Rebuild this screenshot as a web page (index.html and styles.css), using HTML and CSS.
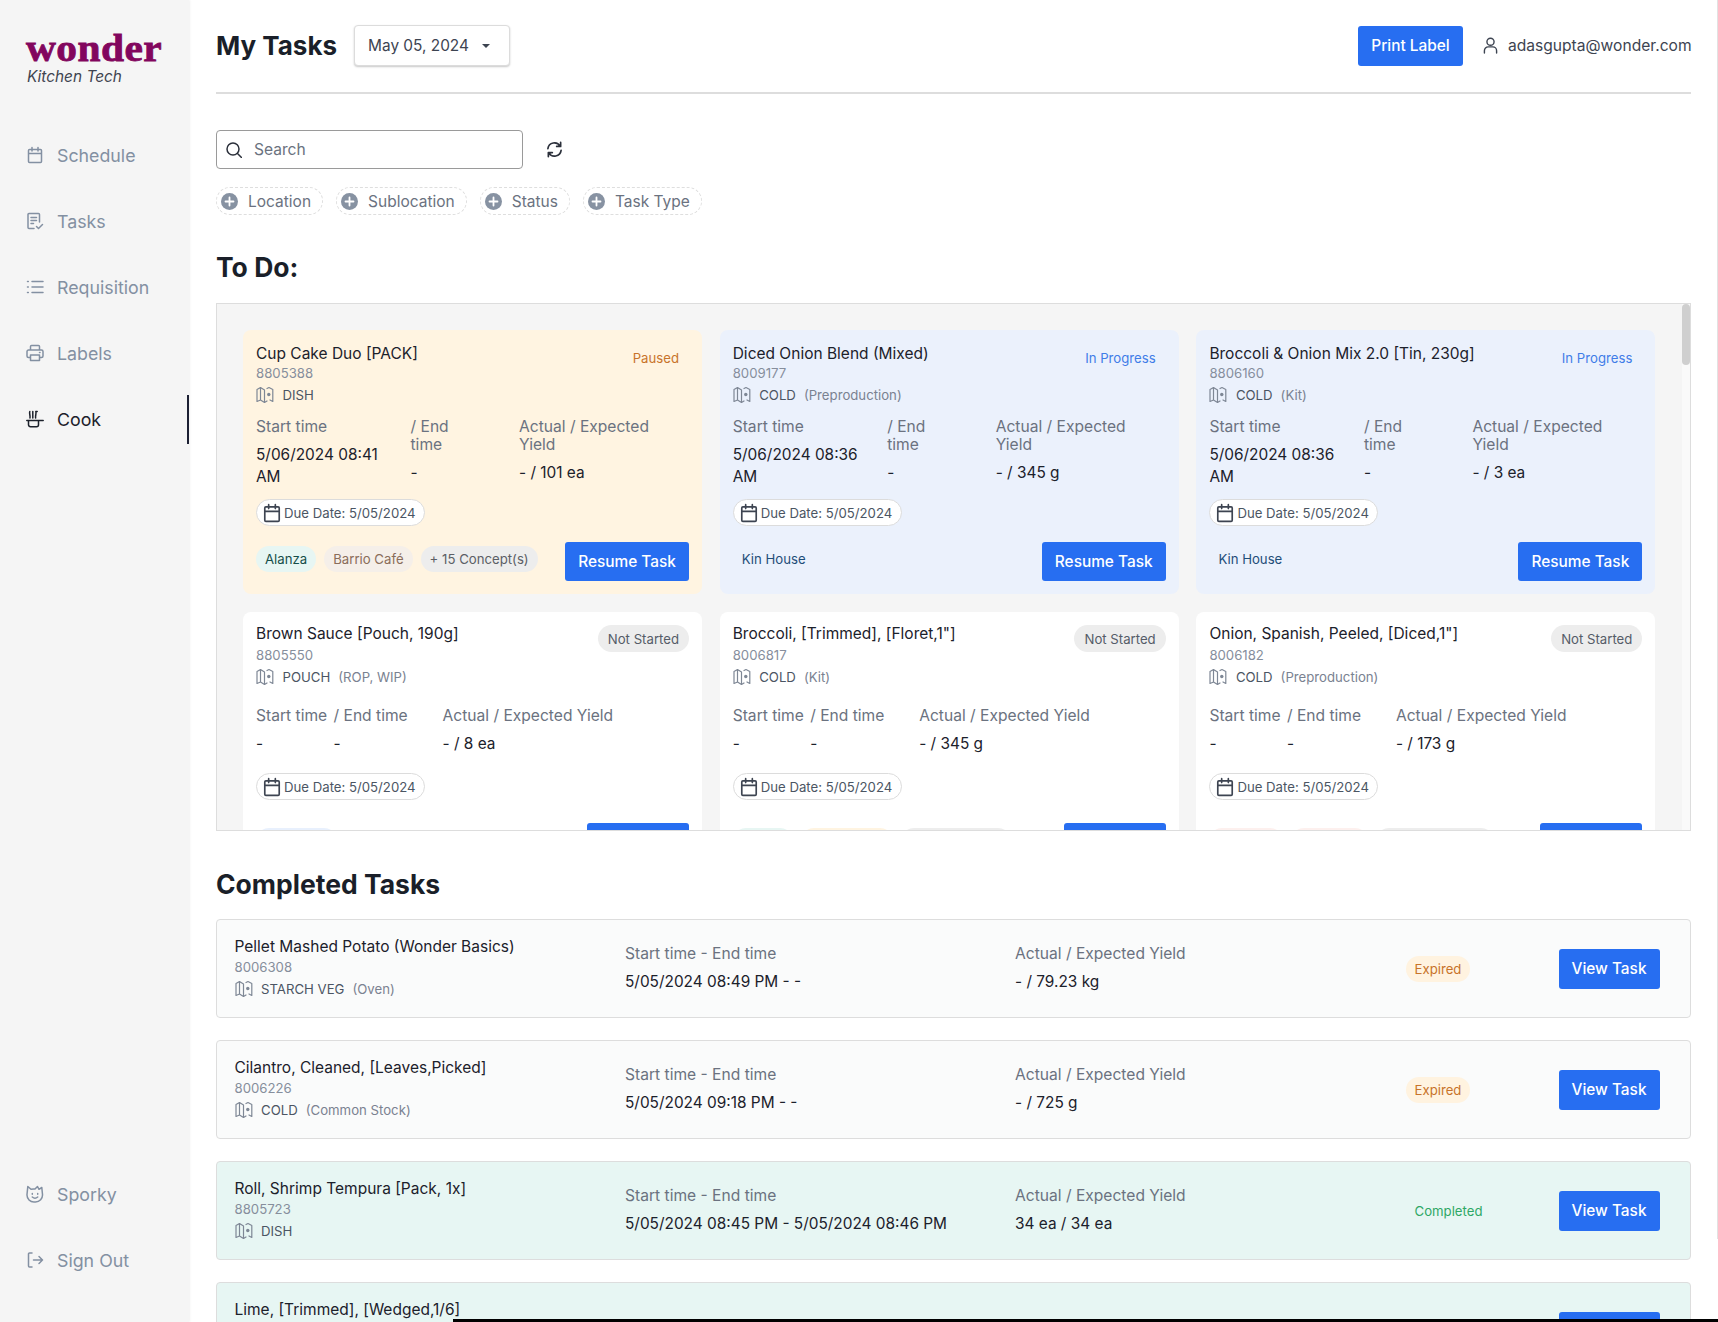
FILE: index.html
```html
<!DOCTYPE html>
<html lang="en">
<head>
<meta charset="utf-8">
<title>My Tasks</title>
<link rel="stylesheet" href="styles.css">
</head>
<body>
<svg class="sprite" aria-hidden="true">
  <symbol id="i-cal" viewBox="0 0 18 18"><path d="M2.500 4.500a1 1 0 0 1 1-1h11a1 1 0 0 1 1 1v11a1 1 0 0 1-1 1h-11a1 1 0 0 1-1-1zM2.500 7.500h13M6 1.500v3.500M12 1.500v3.500"/></symbol>
  <symbol id="i-tasks" viewBox="0 0 18 18"><path d="M8 16.500H3a1 1 0 0 1-1-1v-13a1 1 0 0 1 1-1h9.500a1 1 0 0 1 1 1V10M5 5.500h5.500M5 8.500h5.500M5 11.500h2.500M10.500 14.500l2 2 4-4"/></symbol>
  <symbol id="i-list" viewBox="0 0 18 18"><path d="M6 3.500h11M6 9h11M6 14.500h11M1.500 3.500h.8M1.500 9h.8M1.500 14.500h.8"/></symbol>
  <symbol id="i-print" viewBox="0 0 18 18"><path d="M4.500 6V2.500a1 1 0 0 1 1-1h7a1 1 0 0 1 1 1V6M4.500 13.500h-2a1.500 1.500 0 0 1-1.500-1.500V7.500A1.500 1.500 0 0 1 2.500 6h13A1.500 1.500 0 0 1 17 7.500V12a1.500 1.500 0 0 1-1.500 1.500h-2M4.500 11h9v5.500h-9zM13.500 8.500h.5"/></symbol>
  <symbol id="i-cook" viewBox="0 0 18 18"><path d="M.8 10.500h16.400M2.500 10.500v4.200a2 2 0 0 0 2 2h6a2 2 0 0 0 2-2v-4.200M3.800 1.500c-.8 2 .6 3.500.2 6.500M6.800 1.500V8M9.800 1.500c.8 2-.6 3.500-.2 6.500M9.800 1.500h1.400"/></symbol>
  <symbol id="i-sporky" viewBox="0 0 18 18"><path d="M1.800 1.500l3.200 2.800a8.500 8.500 0 0 1 4-.3l2.500-2.500 1.500 2.800 2.800-1.800.7 7a7 7 0 0 1-7 7.500h-1A7 7 0 0 1 1 9.500zM6.300 8.500v.8M11.700 8.500v.8M6.300 12c1.500 1.300 3.900 1.300 5.400 0"/></symbol>
  <symbol id="i-out" viewBox="0 0 18 18"><path d="M6 2H3.500a1 1 0 0 0-1 1v12a1 1 0 0 0 1 1H6M7.500 9h9M13 5.500L16.500 9 13 12.500"/></symbol>
  <symbol id="i-map" viewBox="0 0 18 18"><path d="M8.500 4L4.500 1.500 1 3.500v12l3.500-1.500 4 2.500 2.500-1.500M4.500 1.500V14M8.500 4v12.500M11 2.500l2-1 3.800 2v12l-2.800-1.500"/><circle class="fill" cx="12.800" cy="8.500" r="1.700"/></symbol>
  <symbol id="i-plus" viewBox="0 0 17 17"><circle class="solid" cx="8.500" cy="8.500" r="8.500"/><path class="white" d="M8.500 4.500v8M4.500 8.500h8"/></symbol>
  <symbol id="i-search" viewBox="0 0 16 16"><circle cx="7" cy="7" r="6"/><path d="M11.500 11.500L15.500 15.500"/></symbol>
  <symbol id="i-refresh" viewBox="0 0 18 18"><path d="M2 8a7 7 0 0 1 13-2.500M16 10a7 7 0 0 1-13 2.500M15.500 1.500v4.200h-4.200M2.500 16.500v-4.200h4.200"/></symbol>
  <symbol id="i-user" viewBox="0 0 16 18"><circle cx="8" cy="5" r="3.800"/><path d="M1.500 17v-2.500a4 4 0 0 1 4-4h5a4 4 0 0 1 4 4V17"/></symbol>
</svg>

<div class="app">
  <aside class="sidebar">
    <div class="brand">
      <div class="logo">wonder</div>
      <div class="brand-sub">Kitchen Tech</div>
    </div>
    <nav class="nav">
      <a class="nav-item"><svg class="nav-icon"><use href="#i-cal"/></svg><span>Schedule</span></a>
      <a class="nav-item"><svg class="nav-icon"><use href="#i-tasks"/></svg><span>Tasks</span></a>
      <a class="nav-item"><svg class="nav-icon"><use href="#i-list"/></svg><span>Requisition</span></a>
      <a class="nav-item"><svg class="nav-icon"><use href="#i-print"/></svg><span>Labels</span></a>
      <a class="nav-item active"><svg class="nav-icon"><use href="#i-cook"/></svg><span>Cook</span></a>
    </nav>
    <nav class="nav nav-bottom">
      <a class="nav-item"><svg class="nav-icon"><use href="#i-sporky"/></svg><span>Sporky</span></a>
      <a class="nav-item"><svg class="nav-icon"><use href="#i-out"/></svg><span>Sign Out</span></a>
    </nav>
  </aside>

  <main class="main">
    <header class="topbar">
      <h1 class="page-title">My Tasks</h1>
      <button class="date-btn">May 05, 2024<i class="caret"></i></button>
      <div class="topbar-right">
        <button class="btn btn-print">Print Label</button>
        <svg class="user-icon"><use href="#i-user"/></svg>
        <span class="email">adasgupta@wonder.com</span>
      </div>
    </header>

    <div class="search-row">
      <div class="search"><svg class="search-icon"><use href="#i-search"/></svg><span>Search</span></div>
      <svg class="refresh"><use href="#i-refresh"/></svg>
    </div>

    <div class="chips">
      <span class="chip"><svg class="plus"><use href="#i-plus"/></svg>Location</span>
      <span class="chip"><svg class="plus"><use href="#i-plus"/></svg>Sublocation</span>
      <span class="chip"><svg class="plus"><use href="#i-plus"/></svg>Status</span>
      <span class="chip"><svg class="plus"><use href="#i-plus"/></svg>Task Type</span>
    </div>

    <h2 class="section-title todo-title">To Do:</h2>
    <section class="board">
      <div class="board-grid">

        <article class="card paused">
          <div class="card-head">
            <div class="card-info">
              <div class="title">Cup Cake Duo [PACK]</div>
              <div class="sku">8805388</div>
              <div class="loc"><svg class="map"><use href="#i-map"/></svg><span>DISH</span></div>
            </div>
            <span class="status st-paused">Paused</span>
          </div>
          <div class="times times-narrow">
            <div class="tcol"><div class="thead">Start time</div><div class="tval">5/06/2024 08:41 AM</div></div>
            <div class="tcol"><div class="thead">/ End time</div><div class="tval">-</div></div>
            <div class="tcol"><div class="thead">Actual / Expected Yield</div><div class="tval">- / 101 ea</div></div>
          </div>
          <div class="due"><svg class="due-icon"><use href="#i-cal"/></svg>Due Date: 5/05/2024</div>
          <div class="card-foot">
            <div class="tags"><span class="tag t-mint">Alanza</span><span class="tag t-sand">Barrio Café</span><span class="tag t-gray">+ 15 Concept(s)</span></div>
            <button class="btn">Resume Task</button>
          </div>
        </article>

        <article class="card progress">
          <div class="card-head">
            <div class="card-info">
              <div class="title">Diced Onion Blend (Mixed)</div>
              <div class="sku">8009177</div>
              <div class="loc"><svg class="map"><use href="#i-map"/></svg><span>COLD</span><span class="loc-sub">(Preproduction)</span></div>
            </div>
            <span class="status st-progress">In Progress</span>
          </div>
          <div class="times times-narrow">
            <div class="tcol"><div class="thead">Start time</div><div class="tval">5/06/2024 08:36 AM</div></div>
            <div class="tcol"><div class="thead">/ End time</div><div class="tval">-</div></div>
            <div class="tcol"><div class="thead">Actual / Expected Yield</div><div class="tval">- / 345 g</div></div>
          </div>
          <div class="due"><svg class="due-icon"><use href="#i-cal"/></svg>Due Date: 5/05/2024</div>
          <div class="card-foot">
            <div class="tags"><span class="tag t-plain">Kin House</span></div>
            <button class="btn">Resume Task</button>
          </div>
        </article>

        <article class="card progress">
          <div class="card-head">
            <div class="card-info">
              <div class="title">Broccoli &amp; Onion Mix 2.0 [Tin, 230g]</div>
              <div class="sku">8806160</div>
              <div class="loc"><svg class="map"><use href="#i-map"/></svg><span>COLD</span><span class="loc-sub">(Kit)</span></div>
            </div>
            <span class="status st-progress">In Progress</span>
          </div>
          <div class="times times-narrow">
            <div class="tcol"><div class="thead">Start time</div><div class="tval">5/06/2024 08:36 AM</div></div>
            <div class="tcol"><div class="thead">/ End time</div><div class="tval">-</div></div>
            <div class="tcol"><div class="thead">Actual / Expected Yield</div><div class="tval">- / 3 ea</div></div>
          </div>
          <div class="due"><svg class="due-icon"><use href="#i-cal"/></svg>Due Date: 5/05/2024</div>
          <div class="card-foot">
            <div class="tags"><span class="tag t-plain">Kin House</span></div>
            <button class="btn">Resume Task</button>
          </div>
        </article>

        <article class="card card-open">
          <div class="card-head">
            <div class="card-info">
              <div class="title">Brown Sauce [Pouch, 190g]</div>
              <div class="sku">8805550</div>
              <div class="loc"><svg class="map"><use href="#i-map"/></svg><span>POUCH</span><span class="loc-sub">(ROP, WIP)</span></div>
            </div>
            <span class="status st-idle">Not Started</span>
          </div>
          <div class="times times-wide">
            <div class="tcol"><div class="thead">Start time</div><div class="tval">-</div></div>
            <div class="tcol"><div class="thead">/ End time</div><div class="tval">-</div></div>
            <div class="tcol"><div class="thead">Actual / Expected Yield</div><div class="tval">- / 8 ea</div></div>
          </div>
          <div class="due"><svg class="due-icon"><use href="#i-cal"/></svg>Due Date: 5/05/2024</div>
          <div class="card-foot">
            <div class="tags"><span class="tag t-blue w-81"></span></div>
            <button class="btn btn-start"></button>
          </div>
        </article>

        <article class="card card-open">
          <div class="card-head">
            <div class="card-info">
              <div class="title">Broccoli, [Trimmed], [Floret,1"]</div>
              <div class="sku">8006817</div>
              <div class="loc"><svg class="map"><use href="#i-map"/></svg><span>COLD</span><span class="loc-sub">(Kit)</span></div>
            </div>
            <span class="status st-idle">Not Started</span>
          </div>
          <div class="times times-wide">
            <div class="tcol"><div class="thead">Start time</div><div class="tval">-</div></div>
            <div class="tcol"><div class="thead">/ End time</div><div class="tval">-</div></div>
            <div class="tcol"><div class="thead">Actual / Expected Yield</div><div class="tval">- / 345 g</div></div>
          </div>
          <div class="due"><svg class="due-icon"><use href="#i-cal"/></svg>Due Date: 5/05/2024</div>
          <div class="card-foot">
            <div class="tags"><span class="tag t-mint w-60"></span><span class="tag t-cream w-92"></span><span class="tag t-gray w-110"></span></div>
            <button class="btn btn-start"></button>
          </div>
        </article>

        <article class="card card-open">
          <div class="card-head">
            <div class="card-info">
              <div class="title">Onion, Spanish, Peeled, [Diced,1"]</div>
              <div class="sku">8006182</div>
              <div class="loc"><svg class="map"><use href="#i-map"/></svg><span>COLD</span><span class="loc-sub">(Preproduction)</span></div>
            </div>
            <span class="status st-idle">Not Started</span>
          </div>
          <div class="times times-wide">
            <div class="tcol"><div class="thead">Start time</div><div class="tval">-</div></div>
            <div class="tcol"><div class="thead">/ End time</div><div class="tval">-</div></div>
            <div class="tcol"><div class="thead">Actual / Expected Yield</div><div class="tval">- / 173 g</div></div>
          </div>
          <div class="due"><svg class="due-icon"><use href="#i-cal"/></svg>Due Date: 5/05/2024</div>
          <div class="card-foot">
            <div class="tags"><span class="tag t-rose w-74"></span><span class="tag t-rose w-77"></span><span class="tag t-gray w-118"></span></div>
            <button class="btn btn-start"></button>
          </div>
        </article>

      </div>
      <div class="track"><div class="thumb"></div></div>
    </section>

    <h2 class="section-title done-title">Completed Tasks</h2>
    <section class="done-list">
      <article class="row">
        <div class="row-info">
          <div class="title">Pellet Mashed Potato (Wonder Basics)</div>
          <div class="sku">8006308</div>
          <div class="loc"><svg class="map"><use href="#i-map"/></svg><span>STARCH VEG</span><span class="loc-sub">(Oven)</span></div>
        </div>
        <div class="rcol"><div class="thead">Start time - End time</div><div class="tval">5/05/2024 08:49 PM - -</div></div>
        <div class="rcol"><div class="thead">Actual / Expected Yield</div><div class="tval">- / 79.23 kg</div></div>
        <div><span class="status st-expired">Expired</span></div>
        <button class="btn btn-view">View Task</button>
      </article>
      <article class="row">
        <div class="row-info">
          <div class="title">Cilantro, Cleaned, [Leaves,Picked]</div>
          <div class="sku">8006226</div>
          <div class="loc"><svg class="map"><use href="#i-map"/></svg><span>COLD</span><span class="loc-sub">(Common Stock)</span></div>
        </div>
        <div class="rcol"><div class="thead">Start time - End time</div><div class="tval">5/05/2024 09:18 PM - -</div></div>
        <div class="rcol"><div class="thead">Actual / Expected Yield</div><div class="tval">- / 725 g</div></div>
        <div><span class="status st-expired">Expired</span></div>
        <button class="btn btn-view">View Task</button>
      </article>
      <article class="row row-done">
        <div class="row-info">
          <div class="title">Roll, Shrimp Tempura [Pack, 1x]</div>
          <div class="sku">8805723</div>
          <div class="loc"><svg class="map"><use href="#i-map"/></svg><span>DISH</span></div>
        </div>
        <div class="rcol"><div class="thead">Start time - End time</div><div class="tval">5/05/2024 08:45 PM - 5/05/2024 08:46 PM</div></div>
        <div class="rcol"><div class="thead">Actual / Expected Yield</div><div class="tval">34 ea / 34 ea</div></div>
        <div><span class="status st-done">Completed</span></div>
        <button class="btn btn-view">View Task</button>
      </article>
      <article class="row row-done">
        <div class="row-info">
          <div class="title">Lime, [Trimmed], [Wedged,1/6]</div>
        </div>
        <div class="rcol"><div class="thead">Start time - End time</div></div>
        <div class="rcol"><div class="thead">Actual / Expected Yield</div></div>
        <div></div>
        <button class="btn btn-view"></button>
      </article>
    </section>
  </main>
</div>
<div class="edge-line"></div>
<div class="black-bar"></div>
</body>
</html>
```

FILE: styles.css
```css
* { box-sizing: border-box; }
html, body { margin: 0; height: 1322px; overflow: hidden; }
body {
  font-family: Inter, "Liberation Sans", sans-serif;
  font-size: 15.6px;
  color: #1c212b;
  background: #fff;
  position: relative;
}
.sprite { display: none; }
svg { fill: none; stroke: currentColor; stroke-width: 1.5; stroke-linecap: round; stroke-linejoin: round; flex: none; }
.app { display: flex; height: 1322px; }

/* sidebar */
.sidebar {
  width: 189px; flex: none; background: #f5f5f5;
  display: flex; flex-direction: column;
  box-shadow: 1px 0 2px rgba(0,0,0,.06);
  position: relative;
}
.brand { height: 122px; padding: 27px 0 0 26px; }
.logo {
  font-family: "Liberation Serif", serif;
  font-weight: 700; font-size: 38px; line-height: 42px;
  color: #82065e; letter-spacing: .4px;
  -webkit-text-stroke: .8px #82065e;
  transform: scaleX(1.09); transform-origin: left center;
}
.brand-sub { font-style: italic; font-size: 15.4px; line-height: 18px; color: #3f4450; margin: -1px 0 0 1px; }
.nav-item {
  height: 66px; display: flex; align-items: center; gap: 13px;
  padding-left: 26px; font-size: 17.8px; color: #8390a2; position: relative;
}
.nav-icon { width: 18px; height: 18px; }
.nav-item.active { color: #1c212b; }
.nav-item.active::after {
  content: ""; position: absolute; right: 0; top: 9px; width: 2px; height: 49px; background: #1c2033;
}
.nav-bottom { margin-top: auto; padding-bottom: 29px; }

/* main */
.main { flex: 1; min-width: 0; padding: 0 27px; overflow: hidden; }
.topbar { height: 94px; border-bottom: 2px solid #ddd; display: flex; align-items: center; padding-bottom: 1px; }
.page-title { margin: 0 17px 0 0; font-size: 26px; line-height: 34px; font-weight: 700; color: #1a1f29; }
.date-btn {
  font: inherit; font-size: 15.4px; color: #3d4451; background: #fff;
  height: 41px; width: 156px; padding: 0 14px 0 13px; display: flex; align-items: center; justify-content: space-between;
  border: 1px solid #dcdcdc; border-radius: 4px; box-shadow: 0 1px 2px rgba(0,0,0,.22);
}
.caret { width: 0; height: 0; border-left: 4.500px solid transparent; border-right: 4.500px solid transparent; border-top: 4.500px solid #3d4451; margin-right: 5px; }
.topbar-right { margin-left: auto; display: flex; align-items: center; }
.btn {
  font: inherit; font-size: 15.4px; font-weight: 500; color: #fff; background: #276ef1;
  border: 0; border-radius: 3px; height: 39px; padding: 0; display: block; flex: none;
}
.btn-print { width: 105px; height: 40px; }
.user-icon { width: 15px; height: 17px; margin: 0 10px 0 20px; color: #3d4451; }
.email { color: #3d4451; width: 183px; white-space: nowrap; text-align: right; font-size: 15.6px; }

.search-row { margin-top: 36px; display: flex; align-items: center; gap: 23px; }
.search {
  width: 307px; height: 39px; border: 1px solid #9a9a9a; border-radius: 4px;
  display: flex; align-items: center; gap: 12px; padding-left: 9px; color: #6b7280;
}
.search-icon { width: 16px; height: 16px; color: #2b303b; }
.refresh { width: 17px; height: 17px; color: #2b303b; stroke-width: 1.8; }

.chips { margin-top: 18px; display: flex; gap: 13px; }
.chip {
  height: 28px; border: 1px dashed #dedede; border-radius: 14px; display: flex; align-items: center;
  gap: 10px; padding: 0 11px 0 4px; color: #6b7280; font-size: 15.5px;
}
.plus { width: 17px; height: 17px; }
#i-plus .solid { fill: #8792a2; stroke: none; }
#i-plus .white { stroke: #fff; stroke-width: 1.8; }

.section-title { margin: 0; font-size: 26.500px; line-height: 32px; font-weight: 700; color: #1a1f29; }
.todo-title { margin-top: 36px; }
.done-title { margin-top: 37px; }

.board {
  margin-top: 20px; height: 528px; background: #f5f5f5; border: 1px solid #ddd;
  display: flex; overflow: hidden;
}
.board-grid {
  flex: 1; padding: 26px 0 0 26px; display: grid;
  grid-template-columns: repeat(3, 459px); column-gap: 17.700px; row-gap: 18px; align-content: start;
}
.track { width: 8px; flex: none; background: #fafafa; }
.thumb { height: 61px; border-radius: 4px; background: #cfcfcf; }

.card { background: #fff; border-radius: 8px; padding: 14px 13px 13px; }
.paused { background: #fff4e1; }
.progress { background: #ebf1fc; }
.card-head { display: flex; justify-content: space-between; align-items: flex-start; }
.title { font-size: 15.5px; line-height: 20px; color: #1c212b; white-space: nowrap; }
.sku { font-size: 13.200px; line-height: 19px; color: #868e9c; }
.loc { margin-top: 1px; height: 22px; display: flex; align-items: center; font-size: 13.200px; color: #4b5563; }
.map { width: 18px; height: 18px; margin-right: 8.500px; color: #7e8795; stroke-width: 1.2; }
#i-map .fill { fill: #7e8795; stroke: none; }
.loc-sub { margin-left: 8px; color: #7a8291; }
.card-open .title { margin: -2px 0 2px; }

.status {
  display: inline-flex; align-items: center; height: 27px; padding: 0 10px; border-radius: 14px;
  font-size: 13.200px; white-space: nowrap;
}
.st-paused { color: #c8732a; }
.st-progress { color: #3f7de8; }
.st-idle { background: #ededed; color: #555c68; margin-top: -1px; }
.st-expired { background: #fff3e0; color: #c8732a; padding: 0 9px; height: 26px; }
.st-done { color: #2fa866; padding: 0 9px; }

.times { display: grid; margin-top: 12px; }
.times-narrow { grid-template-columns: 154.500px 108.500px 160px; }
.times-wide { grid-template-columns: 77.500px 109px 1fr; margin-top: 19px; white-space: nowrap; }
.times-narrow .tcol:nth-child(1) { padding-right: 20px; }
.times-narrow .tcol:nth-child(2) { padding-right: 40px; }
.thead { line-height: 18px; color: #6b7280; }
.tval { font-size: 15.4px; line-height: 22px; margin-top: 8px; color: #1c212b; }

.due {
  margin-top: 11px; width: 169px; height: 27px; border: 1px solid #dcdcdc; border-radius: 14px; background: #fff;
  display: flex; align-items: center; gap: 2px; padding-left: 5px; font-size: 13.200px; color: #4b5563; white-space: nowrap;
}
.due-icon { width: 20px; height: 20px; color: #3d4451; }
.card-open .due { margin-top: 18px; }

.card-foot { margin-top: 16px; display: flex; justify-content: space-between; align-items: flex-start; }
.card-open .card-foot { margin-top: 23px; }
.tags { display: flex; gap: 8px; margin-top: 4px; }
.card-open .tags { margin-top: 5px; }
.tag { height: 26px; border-radius: 13px; padding: 0 9px; display: flex; align-items: center; font-size: 13.200px; white-space: nowrap; }
.t-mint { background: #e7f6f3; color: #164e4a; }
.t-sand { background: #f5efe9; color: #8a6d5a; }
.t-gray { background: #ededed; color: #5c5f66; }
.t-plain { color: #1f4e79; }
.t-blue { background: #e8f0fd; }
.t-cream { background: #fff4e1; }
.t-rose { background: #fdf0ee; }
.w-60 { width: 60px; }
.w-74 { width: 74px; }
.w-77 { width: 77px; }
.w-81 { width: 81px; }
.w-92 { width: 92px; }
.w-110 { width: 110px; }
.w-118 { width: 118px; }
.card-foot .btn { width: 124px; }
.card-foot .btn-start { width: 102px; }

/* completed */
.done-list { margin-top: 19px; display: flex; flex-direction: column; gap: 22px; }
.row {
  height: 99px; flex: none; background: #fafbfb; border: 1px solid #ddd; border-radius: 4px;
  display: grid; grid-template-columns: 390.500px 390px 390.500px 153px 101px; align-items: center; padding-left: 17.500px;
}
.row-done { background: #e7f6f3; }
.row-info { align-self: start; padding-top: 17px; }
.row-info .sku { margin-top: 1px; }
.rcol { padding-top: 1px; }
.rcol .tval { margin-top: 8px; }
.btn-view { width: 101px; height: 40px; }

.edge-line { position: absolute; right: 0; top: 0; width: 1px; height: 1239px; background: #e2e2e2; }
.black-bar { position: absolute; left: 453px; right: 0; bottom: 0; height: 3px; background: #000; }
```
